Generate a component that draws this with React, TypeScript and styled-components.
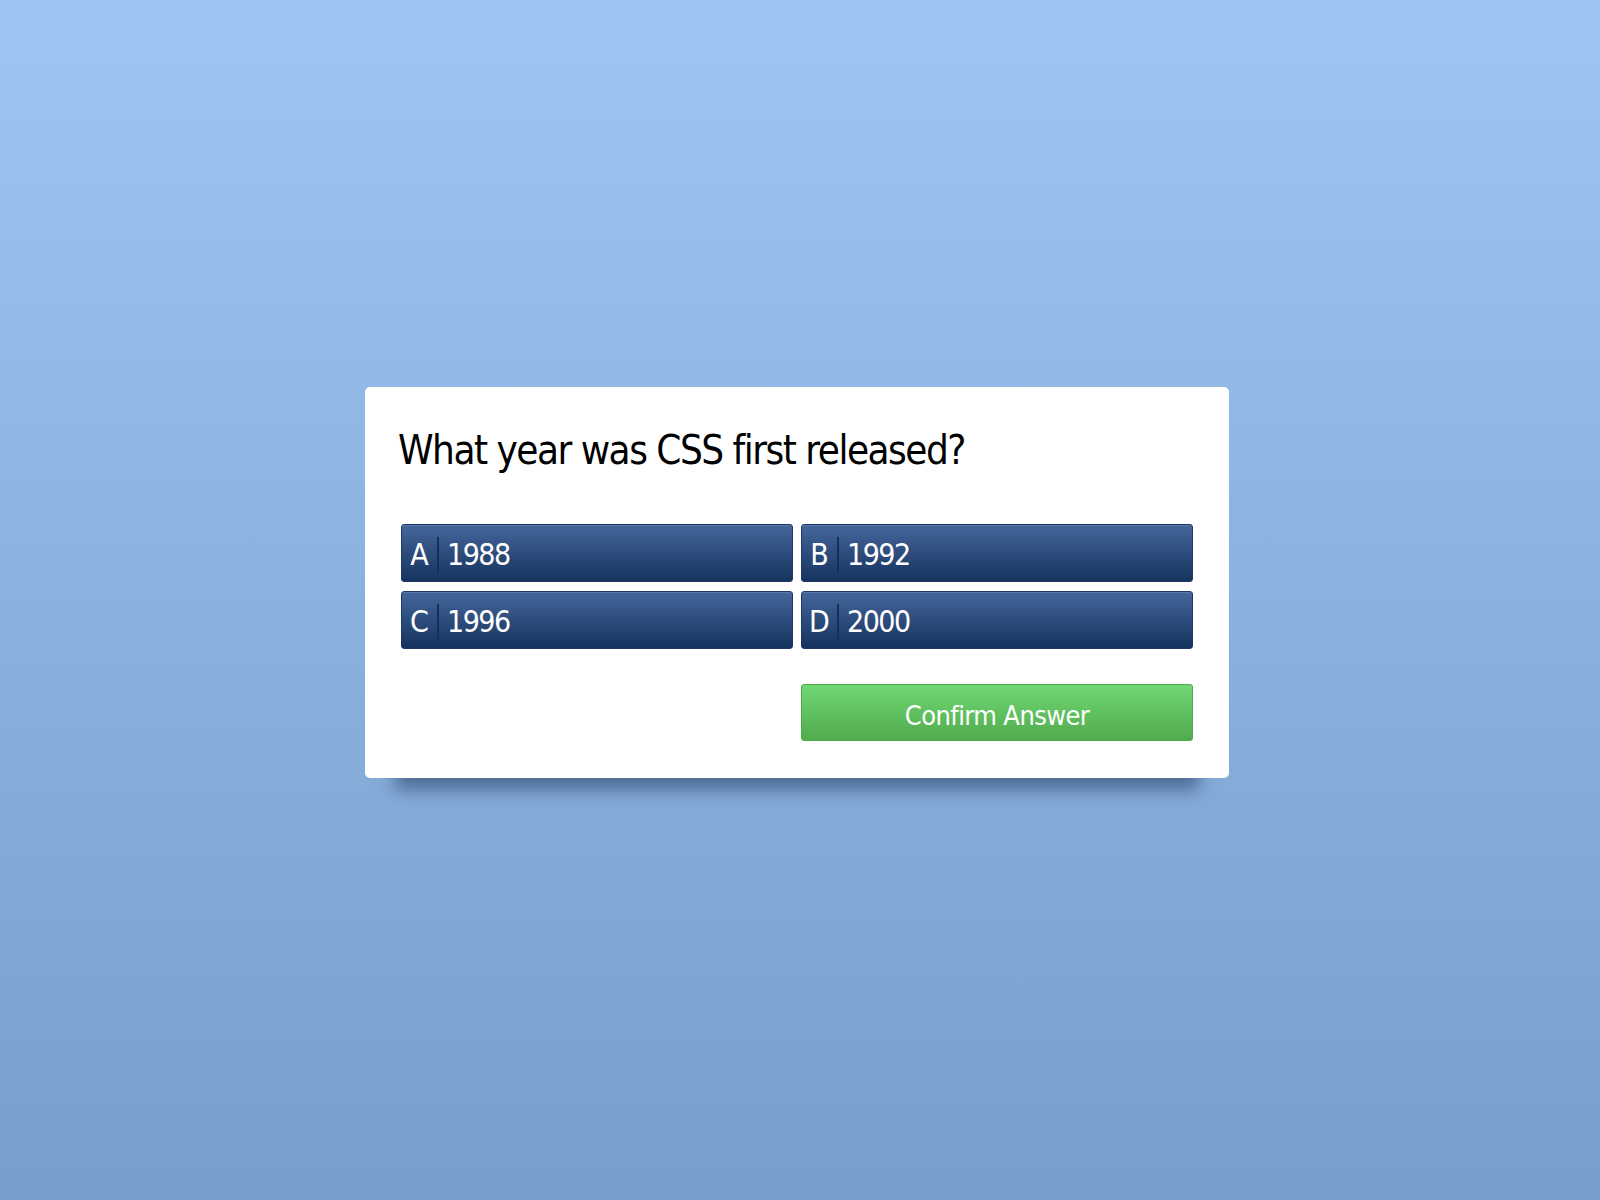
import React from "react";
import styled, { createGlobalStyle } from "styled-components";

const Global = createGlobalStyle`
  html, body { margin: 0; padding: 0; }
  body {
    min-height: 1200px;
    background: linear-gradient(to bottom, #9ec5f3 0%, #789fcb 100%);
    font-family: "DejaVu Sans Condensed", "Liberation Sans", sans-serif;
  }
`;

const Page = styled.div`
  height: 1200px;
  display: flex;
  justify-content: center;
  padding: 387px 6px 0 0;
  box-sizing: border-box;
`;

const Card = styled.div`
  width: 864px;
  height: 391px;
  box-sizing: border-box;
  background: #fff;
  border-radius: 5px;
  padding: 36px 36px 37px;
  box-shadow: 0 42px 16px -30px rgba(25, 45, 85, 0.5);
  display: flex;
  flex-direction: column;
`;

const Title = styled.h1`
  margin: 0 0 0 -3px;
  font-size: 40px;
  font-weight: 400;
  color: #000;
  letter-spacing: -1.5px;
  line-height: 53px;
  padding-top: 1px;
`;

const Grid = styled.div`
  margin-top: 47px;
  display: grid;
  grid-template-columns: 1fr 1fr;
  gap: 9px 8px;
`;

const Option = styled.button`
  height: 58px;
  border: 1px solid #1c3965;
  border-radius: 3px;
  background: linear-gradient(to bottom, #44669b 0%, #16335e 100%);
  box-shadow: inset 0 1px 0 rgba(255, 255, 255, 0.12);
  color: #fff;
  display: flex;
  align-items: center;
  padding: 4px 0 0;
  font-family: inherit;
  cursor: pointer;
`;

const Letter = styled.span`
  width: 35px;
  text-align: center;
  font-size: 30px;
  line-height: 36px;
  border-right: 2px solid #14305a;
`;

const Value = styled.span`
  padding-left: 8px;
  font-size: 30px;
  line-height: 36px;
  letter-spacing: -1.5px;
`;

const Footer = styled.div`
  margin-top: 35px;
  display: grid;
  grid-template-columns: 1fr 1fr;
  gap: 8px;
`;

const Confirm = styled.button`
  grid-column: 2;
  height: 57px;
  border: 1px solid #4ea94a;
  border-radius: 3px;
  background: linear-gradient(to bottom, #70d775 0%, #51ab4c 100%);
  color: #fff;
  font-family: inherit;
  font-size: 27px;
  letter-spacing: -0.6px;
  padding: 6px 0 0;
  cursor: pointer;
`;

const options = [
  { l: "A", v: "1988" },
  { l: "B", v: "1992" },
  { l: "C", v: "1996" },
  { l: "D", v: "2000" },
];

export default function App() {
  return (
    <>
      <Global />
      <Page>
        <Card>
          <Title>What year was CSS first released?</Title>
          <Grid>
            {options.map((o) => (
              <Option key={o.l}>
                <Letter>{o.l}</Letter>
                <Value>{o.v}</Value>
              </Option>
            ))}
          </Grid>
          <Footer>
            <Confirm>Confirm Answer</Confirm>
          </Footer>
        </Card>
      </Page>
    </>
  );
}
